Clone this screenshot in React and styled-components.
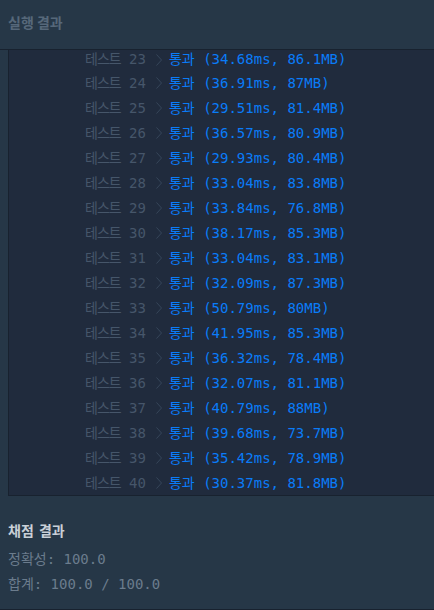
import React from "react";
import styled, { createGlobalStyle } from "styled-components";

const results = [
  [23, "34.68ms", "86.1MB"],
  [24, "36.91ms", "87MB"],
  [25, "29.51ms", "81.4MB"],
  [26, "36.57ms", "80.9MB"],
  [27, "29.93ms", "80.4MB"],
  [28, "33.04ms", "83.8MB"],
  [29, "33.84ms", "76.8MB"],
  [30, "38.17ms", "85.3MB"],
  [31, "33.04ms", "83.1MB"],
  [32, "32.09ms", "87.3MB"],
  [33, "50.79ms", "80MB"],
  [34, "41.95ms", "85.3MB"],
  [35, "36.32ms", "78.4MB"],
  [36, "32.07ms", "81.1MB"],
  [37, "40.79ms", "88MB"],
  [38, "39.68ms", "73.7MB"],
  [39, "35.42ms", "78.9MB"],
  [40, "30.37ms", "81.8MB"],
];

const GlobalStyle = createGlobalStyle`
  html, body {
    margin: 0;
    padding: 0;
    background: #263747;
    overflow: hidden;
  }
`;

const Page = styled.div`
  width: 434px;
  height: 610px;
  background: #263747;
  display: flex;
  flex-direction: column;
`;

const Header = styled.div`
  height: 50px;
  display: flex;
  align-items: center;
  padding: 0 8px 6px;
  box-sizing: border-box;
  border-bottom: 1px solid #18222f;
`;

const Title = styled.h2`
  margin: 0;
  font-family: "Noto Sans CJK KR", sans-serif;
  font-size: 14px;
  font-weight: 700;
  color: #56687a;
`;

const Console = styled.div`
  margin-left: 8px;
  height: 446px;
  box-sizing: border-box;
  background: #202b3d;
  border-left: 1px solid #18222f;
  border-bottom: 1px solid #18222f;
`;

const List = styled.div`
  padding-left: 76px;
`;

/* the list is scrolled: only the lower part of the first row shows */
const Row = styled.div`
  height: 25px;
  display: flex;
  align-items: center;
  line-height: 16px;
  font-family: "DejaVu Sans Mono", "Noto Sans CJK KR", monospace;
  font-size: 14px;
  white-space: pre;

  &:first-child {
    height: 20px;
    align-items: flex-start;
  }
`;

const Hangul = styled.span`
  font-family: "Noto Sans CJK KR", sans-serif;
  font-size: 14px;
  letter-spacing: ${(p) => (p.$tight ? "-1px" : "0")};
`;

const Name = styled.span`
  color: #46566a;
`;

const Chevron = styled.svg`
  margin: 0 7px 0 10px;
  flex: none;
  align-self: center;
`;

const Status = styled.span`
  color: ${(p) => (p.$pass ? "#0a7cf8" : "#e24c4b")};
`;

const Summary = styled.div`
  flex: 1;
  padding: 24px 8px 0;
  border-bottom: 1px solid #18222f;
`;

const SummaryTitle = styled.h3`
  margin: 0 0 6px;
  height: 20px;
  line-height: 20px;
  font-family: "Noto Sans CJK KR", sans-serif;
  font-size: 14px;
  font-weight: 700;
  word-spacing: 2px;
  color: #c9d0d7;
`;

const SummaryLine = styled.div`
  height: 25px;
  line-height: 25px;
  font-family: "DejaVu Sans Mono", "Noto Sans CJK KR", monospace;
  font-size: 14px;
  color: #6b7c8d;
  white-space: pre;
`;

export default function App() {
  return (
    <>
      <GlobalStyle />
      <Page>
        <Header>
          <Title>실행 결과</Title>
        </Header>
        <Console>
          <List>
            {results.map(([n, time, mem]) => (
              <Row key={n}>
                <Name>
                  <Hangul $tight>테스트</Hangul> {n}
                </Name>
                <Chevron width="6" height="12" viewBox="0 0 6 12">
                  <polyline
                    points="0.5,0.5 5.5,6 0.5,11.5"
                    fill="none"
                    stroke="#36465a"
                    strokeWidth="1"
                  />
                </Chevron>
                <Status $pass>
                  <Hangul>통과</Hangul> ({time}, {mem})
                </Status>
              </Row>
            ))}
          </List>
        </Console>
        <Summary>
          <SummaryTitle>채점 결과</SummaryTitle>
          <SummaryLine>
            <Hangul>정확성</Hangul>: 100.0
          </SummaryLine>
          <SummaryLine>
            <Hangul>합계</Hangul>: 100.0 / 100.0
          </SummaryLine>
        </Summary>
      </Page>
    </>
  );
}
